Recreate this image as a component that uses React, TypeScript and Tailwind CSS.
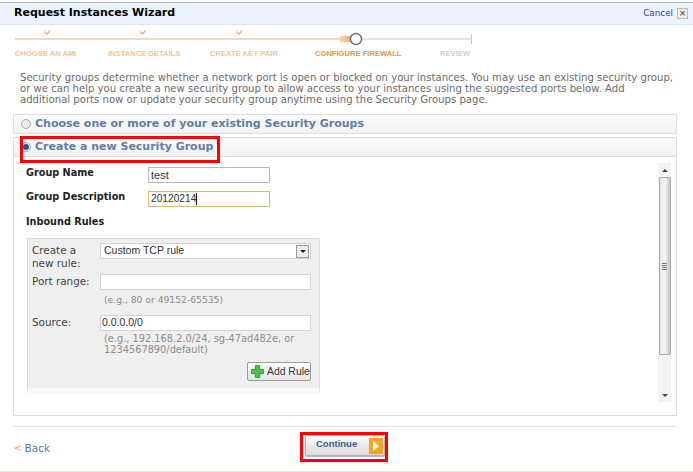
import React from "react";

const font = "font-['DejaVu_Sans',Verdana,sans-serif]";
const arial = "font-['Liberation_Sans',Arial,sans-serif]";

const steps = [
  { label: "CHOOSE AN AMI", className: "ml-[15px] w-[93px] text-[#f0c49c]" },
  { label: "INSTANCE DETAILS", className: "w-[102px] text-[#f0c49c]" },
  { label: "CREATE KEY PAIR", className: "w-[105px] text-[#f0c49c]" },
  { label: "CONFIGURE FIREWALL", className: "w-[125px] text-[#ee9440]" },
  { label: "REVIEW", className: "text-[#d0d0d0]" },
];

// progress line with the tick marks and the open circle of the current step
const StepTrack = () => (
  <svg width="693" height="20" viewBox="0 0 693 20" className="block">
    <defs>
      <linearGradient id="fade" x1="0" x2="1" y1="0" y2="0">
        <stop offset="0" stopColor="#f6d7b8" />
        <stop offset="1" stopColor="#f3a860" />
      </linearGradient>
    </defs>
    <rect x="15" y="11" width="325" height="2" fill="#f6d7b8" />
    <rect x="340" y="9" width="12" height="6" fill="url(#fade)" />
    <rect x="362" y="11" width="109" height="2" fill="#e2e2e2" />
    <rect x="471" y="7" width="1" height="10" fill="#c8c8c8" />
    <circle cx="356" cy="12" r="5.5" fill="#fff" stroke="#6f6f6f" strokeWidth="1.4" />
    <path d="M44.5 4.5 L47 7 L50 3.5" fill="none" stroke="#f0b070" strokeWidth="1.4" />
    <path d="M140 4.5 L142.5 7 L145.5 3.5" fill="none" stroke="#f0b070" strokeWidth="1.4" />
    <path d="M236.5 4.5 L239 7 L242 3.5" fill="none" stroke="#f0b070" strokeWidth="1.4" />
  </svg>
);

const Radio = ({ on }: { on?: boolean }) => (
  <span className="relative w-[10px] h-[10px] rounded-full border border-[#a8a8a8] bg-[#ececec] shrink-0 flex items-center justify-center">
    {on && <span className="w-[6px] h-[6px] rounded-full bg-[#1f5f8f]" />}
  </span>
);

const PanelHead = ({ on, children }: { on?: boolean; children: React.ReactNode }) => (
  <div className="h-[20px] flex items-center gap-[4px] pl-[7px] bg-gradient-to-b from-[#fbfbfb] to-[#f2f2f2] border border-[#dedede]">
    <Radio on={on} />
    <span className="text-[11px] font-bold text-[#5f7fa6] whitespace-nowrap">{children}</span>
  </div>
);

const Scrollbar = () => (
  <div className="absolute right-[5px] top-[6px] w-[13px] h-[239px] bg-[#f3f3f3] flex flex-col items-center">
    <div className="h-[14px] flex items-center">
      <span className="w-0 h-0 border-x-[3px] border-x-transparent border-b-[3px] border-b-[#444]" />
    </div>
    <div className="w-[12px] h-[178px] border border-[#a9a9a9] rounded-[1px] bg-gradient-to-r from-[#e8e8e8] via-[#f4f4f4] to-[#c4c4c4] flex flex-col items-center justify-center gap-[1px]">
      <span className="w-[5px] h-px bg-[#777]" />
      <span className="w-[5px] h-px bg-[#777]" />
      <span className="w-[5px] h-px bg-[#777]" />
      <span className="w-[5px] h-px bg-[#777]" />
    </div>
    <div className="flex-1 flex items-end pb-[5px]">
      <span className="w-0 h-0 border-x-[3px] border-x-transparent border-t-[3px] border-t-[#444]" />
    </div>
  </div>
);

const RuleBox = () => (
  <div className="ml-[13px] mt-[10px] w-[293px] h-[155px] border border-[#dcdcdc] bg-[#efefef] border-b-[5px] border-b-[#f8f8f8] text-[10.4px] text-[#444]">
    <div className="flex pt-[4px] pl-[4px]">
      <div className="w-[68px] leading-[13px] pt-[1px]">
        Create a
        <br />
        new rule:
      </div>
      <div className={`w-[211px] h-[16px] bg-white border border-[#d4d4d4] flex items-center justify-between pl-[3px] pr-[1px] ${arial} text-[10.5px] text-[#333]`}>
        Custom TCP rule
        <span className="w-[13px] h-[13px] border border-[#999] bg-[#ececec] flex items-center justify-center">
          <span className="w-0 h-0 border-x-[3px] border-x-transparent border-t-[3px] border-t-[#222]" />
        </span>
      </div>
    </div>
    <div className="flex pt-[4px] pl-[4px] items-center">
      <div className="w-[68px]">Port range:</div>
      <div className="w-[211px] h-[16px] bg-white border border-[#d4d4d4]" />
    </div>
    <div className="pl-[76px] pt-[3px] text-[9.2px] leading-[13px] text-[#8c8c8c]">(e.g., 80 or 49152-65535)</div>
    <div className="flex pt-[9px] pl-[4px] items-center">
      <div className="w-[68px]">Source:</div>
      <div className={`w-[211px] h-[16px] bg-white border border-[#d4d4d4] flex items-center pl-[1px] ${arial} text-[10.5px] text-[#333]`}>0.0.0.0/0</div>
    </div>
    <div className="pl-[76px] pt-[3px] text-[9.8px] leading-[10.5px] text-[#8c8c8c] whitespace-nowrap">
      (e.g., 192.168.2.0/24, sg-47ad482e, or
      <br />
      1234567890/default)
    </div>
    <div className="flex justify-end pr-[8px] pt-[7px]">
      <button className={`w-[64px] h-[19px] border border-[#9a9a9a] rounded-[2px] bg-gradient-to-b from-white to-[#e4e4e4] flex items-center gap-[3px] pl-[3px] ${arial} text-[10.4px] text-[#333] whitespace-nowrap`}>
        <svg width="13" height="13" viewBox="0 0 12 12" className="shrink-0">
          <path d="M4 0.5h4v3.5h3.5v4H8v3.5H4V8H0.5V4H4z" fill="#4cc24c" stroke="#2d8f2d" strokeWidth="0.8" />
        </svg>
        Add Rule
      </button>
    </div>
  </div>
);

export default function App() {
  return (
    <div className={`relative w-[693px] h-[472px] overflow-hidden bg-white ${font}`}>
      <div className="h-[2px] bg-white" />
      <div className="h-[23px] border-t border-t-[#a9b3c4] border-b border-b-[#d3e5f7] bg-[#ebf3fd] flex items-center justify-between pl-[14px] pr-[5px]">
        <span className="text-[11px] font-bold text-black">Request Instances Wizard</span>
        <div className="flex items-center gap-[4px]">
          <span className="text-[8.8px] text-[#3b3b8f]">Cancel</span>
          <span className="w-[11px] h-[11px] border border-[#bbb] bg-[#eee] text-[9px] leading-[9px] text-[#333] text-center">×</span>
        </div>
      </div>

      <div className="mt-[2px]">
        <StepTrack />
      </div>
      <div className={`flex ${arial} text-[7.6px] font-bold leading-[12px] mt-[1px]`}>
        {steps.map((s) => (
          <div key={s.label} className={`whitespace-nowrap ${s.className}`}>
            {s.label}
          </div>
        ))}
      </div>

      <p className="pl-[20px] mt-[12px] text-[10.1px] leading-[11px] text-[#6b6b6b] whitespace-nowrap">
        Security groups determine whether a network port is open or blocked on your instances. You may use an existing security group,
        <br />
        or we can help you create a new security group to allow access to your instances using the suggested ports below. Add
        <br />
        additional ports now or update your security group anytime using the Security Groups page.
      </p>

      <div className="ml-[13px] mt-[9px] w-[664px]">
        <PanelHead>Choose one or more of your existing Security Groups</PanelHead>
        <div className="h-[3px]" />
        <PanelHead on>Create a new Security Group</PanelHead>
        <div className="relative h-[259px] border border-t-0 border-[#dedede]">
          <div className="flex pt-[10px] pl-[12px]">
            <label className="w-[122px] text-[9.7px] leading-[12px] font-bold text-[#222]">Group Name</label>
            <div className={`w-[122px] h-[16px] border border-[#b9b9b9] flex items-center pl-[2px] ${arial} text-[11px] text-[#333]`}>test</div>
          </div>
          <div className="flex pt-[8px] pl-[12px]">
            <label className="w-[122px] text-[9.7px] leading-[12px] font-bold text-[#222]">Group Description</label>
            <div className={`w-[122px] h-[16px] border border-[#e0b870] flex items-center pl-[2px] ${arial} text-[10.2px] text-[#333]`}>
              20120214<span className="w-px h-[12px] bg-black" />
            </div>
          </div>
          <div className="pl-[12px] pt-[8px] text-[9.7px] leading-[13px] font-bold text-[#222]">Inbound Rules</div>
          <RuleBox />
          <Scrollbar />
        </div>
      </div>

      <div className="ml-[13px] mt-[10px] w-[664px] h-px bg-[#e2e2e2]" />

      <div className="relative h-[44px]">
        <div className="absolute left-[14px] top-[14px] flex items-center gap-[3px] text-[10.5px] text-[#4f7cb0]">
          <span className="text-[#ee9440] text-[9px]">&lt;</span>
          Back
        </div>
        <button className={`absolute left-[305px] top-[8px] w-[80px] h-[22px] border border-[#b5b5b5] border-b-2 rounded-[2px] bg-gradient-to-b from-[#fafafa] to-[#dcdcdc] flex items-center justify-between pl-[10px] pr-[1px] ${arial} text-[9.5px] font-bold text-[#2f6096]`}>
          <span className="-mt-[3px]">Continue</span>
          <span className="w-[14px] h-[16px] bg-[#f7a428] flex items-center justify-center">
            <span className="w-0 h-0 border-y-[5px] border-y-transparent border-l-[6px] border-l-white" />
          </span>
        </button>
      </div>

      <div className="absolute left-0 right-0 bottom-0 h-px bg-[#d8e6ef]" />

      {/* red annotation boxes drawn over the screenshot */}
      <div className="absolute left-[20px] top-[136px] w-[200px] h-[27px] border-[3px] border-[#ff0000]" />
      <div className="absolute left-[300px] top-[432px] w-[88px] h-[30px] border-[3px] border-[#ff0000]" />
    </div>
  );
}
